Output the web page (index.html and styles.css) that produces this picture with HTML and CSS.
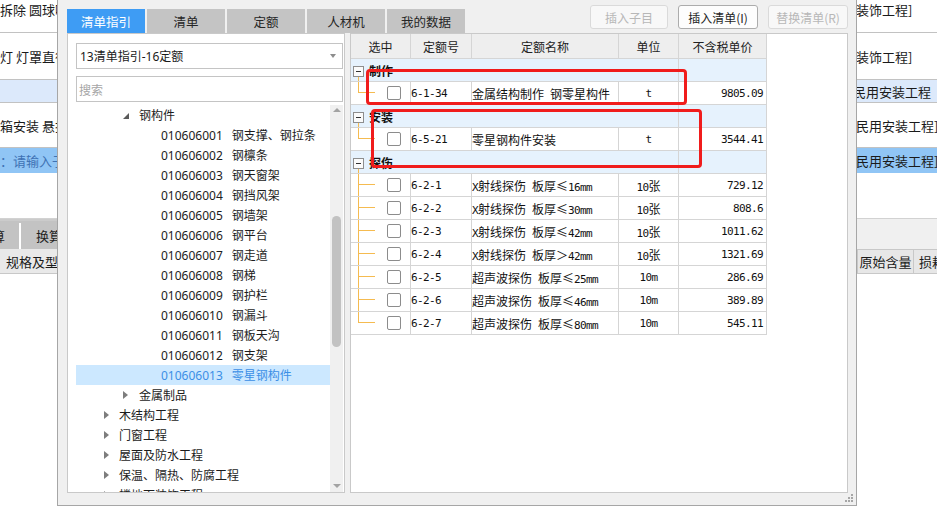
FILE: index.html
```html
<!DOCTYPE html>
<html lang="zh-CN">
<head>
<meta charset="utf-8">
<title>清单指引</title>
<link rel="stylesheet" href="styles.css">
</head>
<body>
<div class="app">
  <div class="bg-row r1"><div class="bl">拆除 圆球吸顶灯安装</div><div class="br">装饰工程]</div></div>
  <div class="bg-row r2"><div class="bl">灯 灯罩直径</div><div class="br">装饰工程]</div></div>
  <div class="bg-row r3"><div class="bl"></div><div class="br"><span class="shift">民用安装工程</span></div></div>
  <div class="bg-row r4"><div class="bl">箱安装 悬挂</div><div class="br">民用安装工程]</div></div>
  <div class="bg-row r5"><div class="bl hint">：请输入子目</div><div class="br">民用安装工程]</div></div>
  <div class="bg-gap"></div>
  <div class="bg-strip">
    <div class="bl tabsbar"><span class="bt cut">计算</span><span class="bt-sep"></span><span class="bt">换算信息</span></div>
    <div class="br"></div>
  </div>
  <div class="bg-head">
    <div class="bl"><span class="hl">规格及型号</span></div>
    <div class="br"><span class="hc hc1">原始含量</span><span class="hc hc2">损耗率</span></div>
  </div>
</div>

<div class="dialog">
  <div class="dlg-top">
    <div class="tabs">
      <div class="tab active">清单指引</div>
      <div class="tab">清单</div>
      <div class="tab">定额</div>
      <div class="tab">人材机</div>
      <div class="tab">我的数据</div>
    </div>
    <div class="btns">
      <button class="btn w78" disabled>插入子目</button>
      <button class="btn">插入清单(I)</button>
      <button class="btn" disabled>替换清单(R)</button>
    </div>
  </div>

  <div class="dlg-body">
    <div class="left-panel">
      <div class="select"><span>13清单指引-16定额</span><span class="caret"></span></div>
      <div class="search">搜索</div>
      <div class="tree-wrap">
        <div class="tree">
          <div class="node lvl2"><span class="tg"><i class="tri-open"></i></span>钢构件</div>
          <div class="node lvl3"><span class="code">010606001</span>钢支撑、钢拉条</div>
          <div class="node lvl3"><span class="code">010606002</span>钢檩条</div>
          <div class="node lvl3"><span class="code">010606003</span>钢天窗架</div>
          <div class="node lvl3"><span class="code">010606004</span>钢挡风架</div>
          <div class="node lvl3"><span class="code">010606005</span>钢墙架</div>
          <div class="node lvl3"><span class="code">010606006</span>钢平台</div>
          <div class="node lvl3"><span class="code">010606007</span>钢走道</div>
          <div class="node lvl3"><span class="code">010606008</span>钢梯</div>
          <div class="node lvl3"><span class="code">010606009</span>钢护栏</div>
          <div class="node lvl3"><span class="code">010606010</span>钢漏斗</div>
          <div class="node lvl3"><span class="code">010606011</span>钢板天沟</div>
          <div class="node lvl3"><span class="code">010606012</span>钢支架</div>
          <div class="node lvl3 selected"><span class="code">010606013</span>零星钢构件</div>
          <div class="node lvl2"><span class="tg"><i class="tri-closed"></i></span>金属制品</div>
          <div class="node lvl1"><span class="tg"><i class="tri-closed"></i></span>木结构工程</div>
          <div class="node lvl1"><span class="tg"><i class="tri-closed"></i></span>门窗工程</div>
          <div class="node lvl1"><span class="tg"><i class="tri-closed"></i></span>屋面及防水工程</div>
          <div class="node lvl1"><span class="tg"><i class="tri-closed"></i></span>保温、隔热、防腐工程</div>
          <div class="node lvl1"><span class="tg"><i class="tri-closed"></i></span>楼地面装饰工程</div>
        </div>
        <div class="scrollbar">
          <span class="sb-up"></span>
          <span class="sb-thumb"></span>
          <span class="sb-fill"></span>
          <span class="sb-down"></span>
        </div>
      </div>
    </div>

    <div class="table-panel">
      <table class="grid">
        <colgroup>
          <col class="c1"><col class="c2"><col class="c3"><col class="c4"><col class="c5">
        </colgroup>
        <thead>
          <tr><th>选中</th><th>定额号</th><th>定额名称</th><th>单位</th><th>不含税单价</th></tr>
        </thead>
        <tbody>
          <tr class="grp"><td colspan="4"><span class="minus"></span><b>制作</b></td><td></td></tr>
          <tr><td class="tc last"><span class="cb"></span></td><td class="code m">6-1-34</td><td class="name">金属结构制作<span class="m"> </span>钢零星构件</td><td class="unit m">t</td><td class="price m">9805.09</td></tr>
          <tr class="grp"><td colspan="4"><span class="minus"></span><b>安装</b></td><td></td></tr>
          <tr><td class="tc last"><span class="cb"></span></td><td class="code m">6-5-21</td><td class="name">零星钢构件安装</td><td class="unit m">t</td><td class="price m">3544.41</td></tr>
          <tr class="grp"><td colspan="4"><span class="minus"></span><b>探伤</b></td><td></td></tr>
          <tr><td class="tc"><span class="cb"></span></td><td class="code m">6-2-1</td><td class="name"><span class="m">X</span>射线探伤<span class="m"> </span>板厚≤<span class="m">16mm</span></td><td class="unit"><span class="m">10</span>张</td><td class="price m">729.12</td></tr>
          <tr><td class="tc"><span class="cb"></span></td><td class="code m">6-2-2</td><td class="name"><span class="m">X</span>射线探伤<span class="m"> </span>板厚≤<span class="m">30mm</span></td><td class="unit"><span class="m">10</span>张</td><td class="price m">808.6</td></tr>
          <tr><td class="tc"><span class="cb"></span></td><td class="code m">6-2-3</td><td class="name"><span class="m">X</span>射线探伤<span class="m"> </span>板厚≤<span class="m">42mm</span></td><td class="unit"><span class="m">10</span>张</td><td class="price m">1011.62</td></tr>
          <tr><td class="tc"><span class="cb"></span></td><td class="code m">6-2-4</td><td class="name"><span class="m">X</span>射线探伤<span class="m"> </span>板厚＞<span class="m">42mm</span></td><td class="unit"><span class="m">10</span>张</td><td class="price m">1321.69</td></tr>
          <tr><td class="tc"><span class="cb"></span></td><td class="code m">6-2-5</td><td class="name">超声波探伤<span class="m"> </span>板厚≤<span class="m">25mm</span></td><td class="unit m">10m</td><td class="price m">286.69</td></tr>
          <tr><td class="tc"><span class="cb"></span></td><td class="code m">6-2-6</td><td class="name">超声波探伤<span class="m"> </span>板厚≤<span class="m">46mm</span></td><td class="unit m">10m</td><td class="price m">389.89</td></tr>
          <tr><td class="tc last"><span class="cb"></span></td><td class="code m">6-2-7</td><td class="name">超声波探伤<span class="m"> </span>板厚≤<span class="m">80mm</span></td><td class="unit m">10m</td><td class="price m">545.11</td></tr>
        </tbody>
      </table>
      <div class="mark mark1"></div>
      <div class="mark mark2"></div>
    </div>
  </div>

  <div class="dlg-foot">
    <svg class="grip" width="9" height="9" viewBox="0 0 9 9" aria-hidden="true">
      <g fill="#a6a6a6">
        <rect x="7" y="1" width="2" height="2"/>
        <rect x="4" y="4" width="2" height="2"/>
        <rect x="7" y="4" width="2" height="2"/>
        <rect x="1" y="7" width="2" height="2"/>
        <rect x="4" y="7" width="2" height="2"/>
        <rect x="7" y="7" width="2" height="2"/>
      </g>
    </svg>
  </div>
</div>
</body>
</html>
```

FILE: styles.css
```css
* { box-sizing: border-box; }
html, body { margin: 0; padding: 0; }
body {
  width: 937px;
  height: 508px;
  overflow: hidden;
  position: relative;
  background: #fff;
  color: #1f1f1f;
  font-family: "Noto Sans", "Noto Sans CJK SC", sans-serif;
}

/* ---------- background application ---------- */
.app {
  display: flex;
  flex-direction: column;
  font-family: "Noto Sans CJK SC", sans-serif;
  font-size: 13px;
  color: #1a1a1a;
}
.bg-row { display: flex; justify-content: space-between; border-bottom: 1px solid #c2c2c2; }
.bl {
  width: 57px;
  flex: none;
  overflow: hidden;
  white-space: nowrap;
  display: flex;
  align-items: center;
}
.br {
  width: 82px;
  flex: none;
  overflow: hidden;
  white-space: nowrap;
  display: flex;
  align-items: center;
  padding-left: 1px;
}
.r1 { height: 33px; }
.r1 .bl, .r1 .br { align-items: flex-start; padding-top: 0; }
.r2 { height: 47px; }
.r3 { height: 23px; background: #dce9fb; }
.r4 { height: 45px; }
.r5 { height: 25px; background: #90c5f5; border-bottom: none; }
.shift { margin-left: -3px; }
.hint { color: #3e72b4; }
.bg-gap { height: 45px; }

.bg-strip { display: flex; justify-content: space-between; height: 31px; border-top: 1px solid #d2d2d2; }
.bg-strip .br { background: #f0f0f0; }
.tabsbar {
  background: #c3c3c3;
  border-top: 2px solid #cbcbcb;
  align-items: stretch;
}
.bt { display: flex; align-items: center; padding-left: 15px; color: #1f1f1f; }
.bt.cut { width: 19px; flex: none; justify-content: flex-end; padding-left: 0; padding-right: 14px; }
.bt-sep { width: 2px; flex: none; background: #fff; margin-top: 2px; }

.bg-head { display: flex; justify-content: space-between; height: 25px; border-bottom: 1px solid #c8c8c8; background: #fff; }
.bg-head .bl { background: #e9e9e9; }
.hl { padding-left: 6px; }
.bg-head .br { padding-left: 2px; align-items: stretch; }
.hc {
  display: flex;
  align-items: center;
  background: #e7e7e7;
  border-top: 1px solid #c8c8c8;
  border-right: 1px solid #c8c8c8;
}
.hc1 { width: 57px; flex: none; justify-content: center; border-left: 1px solid #c8c8c8; }
.hc2 { flex: 1; padding-left: 5px; }

/* ---------- dialog ---------- */
.dialog {
  position: absolute;
  left: 57px;
  top: 0;
  width: 800px;
  height: 506px;
  background: #f0f0f0;
  border: 1px solid #a6a6a6;
  border-top: none;
  padding: 0 8px 0 9px;
  display: flex;
  flex-direction: column;
  font-size: 12px;
}

.dlg-top {
  height: 33px;
  flex: none;
  display: flex;
  justify-content: space-between;
}
.tabs { display: flex; gap: 2px; align-self: flex-end; }
.tab {
  width: 78px;
  height: 24px;
  background: #c4c4c4;
  color: #262626;
  font-family: "Noto Sans CJK SC", sans-serif;
  font-size: 12.5px;
  display: flex;
  align-items: center;
  justify-content: center;
}
.tab.active { background: #3e9cf4; color: #fff; }

.btns { display: flex; gap: 10px; margin-top: 5px; height: 24px; }
.btn {
  width: 80px;
  height: 24px;
  padding: 0;
  border: 1px solid #acacac;
  border-radius: 3px;
  background: #fdfdfd;
  color: #1f1f1f;
  font-family: "Noto Sans CJK SC", sans-serif;
  font-size: 12px;
}
.btn.w78 { width: 78px; }
.btn:disabled { border-color: #dadada; color: #b7b7b7; background: #f8f8f8; }

.dlg-body { display: flex; gap: 5px; height: 460px; flex: none; }

/* left panel */
.left-panel {
  width: 278px;
  flex: none;
  background: #fff;
  border: 1px solid #c9c9c9;
  padding: 9px 0 0 8px;
  display: flex;
  flex-direction: column;
}
.select {
  width: 267px;
  height: 26px;
  flex: none;
  border: 1px solid #c4c4c4;
  display: flex;
  align-items: center;
  justify-content: space-between;
  padding: 0 6px 0 3px;
  color: #1a1a1a;
}
.caret {
  width: 0;
  height: 0;
  border-top: 4px solid #8d8d8d;
  border-left: 3px solid transparent;
  border-right: 3px solid transparent;
}
.search {
  width: 267px;
  height: 26px;
  flex: none;
  margin-top: 7px;
  border: 1px solid #c4c4c4;
  display: flex;
  align-items: center;
  padding-left: 2px;
  color: #a6a6a6;
  font-family: "Noto Sans CJK SC", sans-serif;
}

.tree-wrap { margin-top: 3px; flex: 1; min-height: 0; display: flex; overflow: hidden; }
.tree { width: 254px; flex: none; overflow: hidden; }
.node {
  height: 20px;
  display: flex;
  align-items: center;
  white-space: nowrap;
  color: #1c1c1c;
}
.lvl1 { padding-left: 28px; }
.lvl2 { padding-left: 47px; }
.lvl3 { padding-left: 83px; }
.lvl1 .tg { width: 15px; }
.lvl2 .tg { width: 16px; }
.tg { display: flex; align-items: center; flex: none; height: 20px; }
.tri-closed {
  width: 0;
  height: 0;
  border-left: 5px solid #7d7d7d;
  border-top: 4px solid transparent;
  border-bottom: 4px solid transparent;
}
.tri-open {
  width: 0;
  height: 0;
  border-right: 6px solid #5a5a5a;
  border-top: 6px solid transparent;
  margin-top: 2px;
}
.code { margin-right: 9px; }
.node.selected { background: #cce8ff; color: #3b8fe6; }

.scrollbar {
  width: 13px;
  flex: none;
  background: #f0f0f0;
  display: flex;
  flex-direction: column;
  align-items: center;
}
.sb-up, .sb-down {
  width: 0;
  height: 0;
  border-left: 4px solid transparent;
  border-right: 4px solid transparent;
}
.sb-up { border-bottom: 4px solid #a3a3a3; margin-top: 3px; }
.sb-down { border-top: 4px solid #a3a3a3; margin-bottom: 4px; }
.sb-thumb {
  width: 9px;
  height: 131px;
  margin-top: 104px;
  border-radius: 5px;
  background: #c2c2c2;
}
.sb-fill { flex: 1; }

/* table panel */
.table-panel {
  flex: 1;
  background: #fff;
  border: 1px solid #c9c9c9;
  position: relative;
  overflow: hidden;
}
.grid {
  border-collapse: separate;
  border-spacing: 0;
  table-layout: fixed;
  width: 416px;
  font-family: "Noto Sans CJK SC", sans-serif;
  font-size: 12px;
  color: #111;
}
.c1 { width: 60px; }
.c2 { width: 61px; }
.c3 { width: 147px; }
.c4 { width: 60px; }
.c5 { width: 88px; }
.grid th, .grid td {
  padding: 0;
  border-right: 1px solid #d5d5d5;
  border-bottom: 1px solid #d5d5d5;
  white-space: nowrap;
  overflow: hidden;
}
.grid thead tr { height: 25px; }
.grid tbody tr { height: 23px; }
.grid th { background: #eeeeee; font-weight: normal; text-align: center; color: #222; }
.grp td { background: #e6f2fd; }
.grp td:first-child {
  padding-left: 2px;
  background:
    linear-gradient(#f5bb50, #f5bb50) 7px 17px / 1px 6px no-repeat,
    #e6f2fd;
}
.minus {
  display: inline-block;
  vertical-align: middle;
  width: 11px;
  height: 11px;
  border: 1px solid #8e8e8e;
  background: #fbfbfb;
  position: relative;
  margin-top: -2px;
}
.minus::after {
  content: "";
  position: absolute;
  left: 2px;
  right: 2px;
  top: 4px;
  height: 1px;
  background: #333;
}
.grp b { margin-left: 5px; font-weight: bold; color: #111; }

.tc {
  background:
    linear-gradient(#f5bb50, #f5bb50) 7px 0 / 1px 100% no-repeat,
    linear-gradient(#f5bb50, #f5bb50) 7px 10px / 17px 1px no-repeat;
}
.tc.last {
  background:
    linear-gradient(#f5bb50, #f5bb50) 7px 0 / 1px 11px no-repeat,
    linear-gradient(#f5bb50, #f5bb50) 7px 10px / 17px 1px no-repeat;
}
.cb {
  display: block;
  width: 14px;
  height: 14px;
  margin-left: 36px;
  border: 1px solid #8c8c8c;
  border-radius: 2px;
  background: #fff;
}
.m { font-family: "DejaVu Sans Mono", monospace; font-size: 11px; letter-spacing: -0.62px; }
.code { padding-left: 2px; }
.name { padding-left: 1px; }
.unit { text-align: center; }
.price { text-align: right; padding-right: 3px !important; }

.mark {
  position: absolute;
  border: 3px solid #f01c1c;
  border-radius: 4px;
}
.mark1 { left: 15px; top: 35px; width: 321px; height: 36px; }
.mark2 { left: 20px; top: 75px; width: 331px; height: 59px; }

.dlg-foot {
  flex: 1;
  display: flex;
  justify-content: flex-end;
  align-items: flex-start;
  margin-right: -5px;
}
.grip { display: block; }
```
